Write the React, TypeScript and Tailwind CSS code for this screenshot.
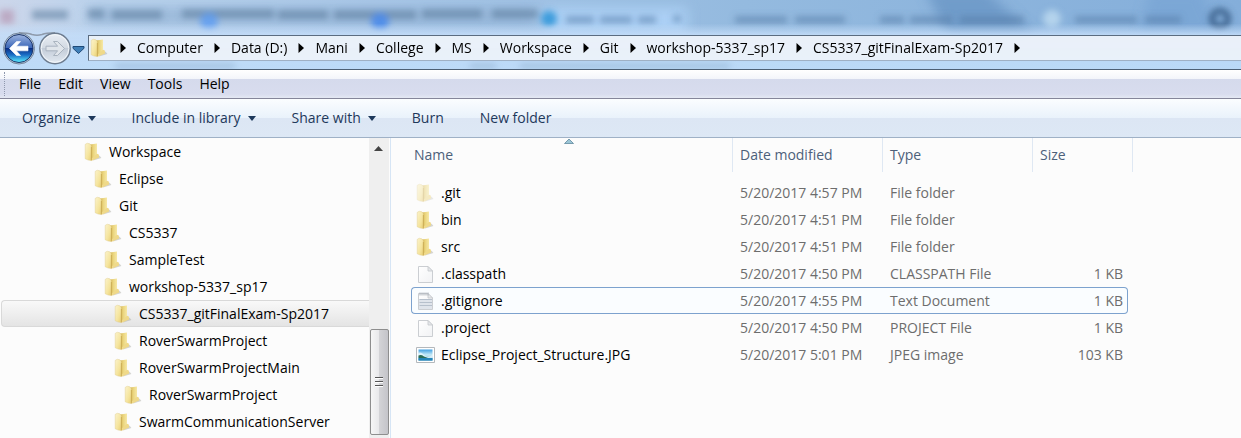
import { Fragment } from 'react';

const crumbs = ['Computer', 'Data (D:)', 'Mani', 'College', 'MS', 'Workspace', 'Git', 'workshop-5337_sp17', 'CS5337_gitFinalExam-Sp2017'];

const menus = ['File', 'Edit', 'View', 'Tools', 'Help'];

const commands = [
  { label: 'Organize', menu: true },
  { label: 'Include in library', menu: true },
  { label: 'Share with', menu: true },
  { label: 'Burn', menu: false },
  { label: 'New folder', menu: false },
];

const tree = [
  { name: 'Workspace', indent: 'pl-[81px]', selected: false },
  { name: 'Eclipse', indent: 'pl-[91px]', selected: false },
  { name: 'Git', indent: 'pl-[91px]', selected: false },
  { name: 'CS5337', indent: 'pl-[101px]', selected: false },
  { name: 'SampleTest', indent: 'pl-[101px]', selected: false },
  { name: 'workshop-5337_sp17', indent: 'pl-[101px]', selected: false },
  { name: 'CS5337_gitFinalExam-Sp2017', indent: 'pl-[111px]', selected: true },
  { name: 'RoverSwarmProject', indent: 'pl-[111px]', selected: false },
  { name: 'RoverSwarmProjectMain', indent: 'pl-[111px]', selected: false },
  { name: 'RoverSwarmProject', indent: 'pl-[121px]', selected: false },
  { name: 'SwarmCommunicationServer', indent: 'pl-[111px]', selected: false },
];

type Kind = 'hidden' | 'folder' | 'file' | 'text' | 'image';

const files: { name: string; kind: Kind; date: string; type: string; size: string; focused?: boolean }[] = [
  { name: '.git', kind: 'hidden', date: '5/20/2017 4:57 PM', type: 'File folder', size: '' },
  { name: 'bin', kind: 'folder', date: '5/20/2017 4:51 PM', type: 'File folder', size: '' },
  { name: 'src', kind: 'folder', date: '5/20/2017 4:51 PM', type: 'File folder', size: '' },
  { name: '.classpath', kind: 'file', date: '5/20/2017 4:50 PM', type: 'CLASSPATH File', size: '1 KB' },
  { name: '.gitignore', kind: 'text', date: '5/20/2017 4:55 PM', type: 'Text Document', size: '1 KB', focused: true },
  { name: '.project', kind: 'file', date: '5/20/2017 4:50 PM', type: 'PROJECT File', size: '1 KB' },
  { name: 'Eclipse_Project_Structure.JPG', kind: 'image', date: '5/20/2017 5:01 PM', type: 'JPEG image', size: '103 KB' },
];

function Gradients() {
  return (
    <svg className="absolute size-0" aria-hidden="true">
      <defs>
        <linearGradient id="folderFront" x1="0" y1="0" x2="1" y2="1">
          <stop offset="0" stopColor="#fbf3cc" />
          <stop offset="0.6" stopColor="#f5e49c" />
          <stop offset="1" stopColor="#e8cd72" />
        </linearGradient>
        <linearGradient id="folderBack" x1="0" y1="0" x2="1" y2="0">
          <stop offset="0" stopColor="#cfae4c" />
          <stop offset="0.45" stopColor="#ead47c" />
          <stop offset="1" stopColor="#f6e8a6" />
        </linearGradient>
        <linearGradient id="page" x1="0" y1="0" x2="1" y2="1">
          <stop offset="0" stopColor="#ffffff" />
          <stop offset="1" stopColor="#f1f2f4" />
        </linearGradient>
        <linearGradient id="photo" x1="0" y1="0" x2="0" y2="1">
          <stop offset="0" stopColor="#3f9ee0" />
          <stop offset="0.5" stopColor="#c9ecf8" />
          <stop offset="1" stopColor="#2c88b8" />
        </linearGradient>
        <linearGradient id="backButton" x1="0" y1="0" x2="0" y2="1">
          <stop offset="0" stopColor="#9db4e0" />
          <stop offset="0.48" stopColor="#3a66b8" />
          <stop offset="0.5" stopColor="#0b2f86" />
          <stop offset="0.72" stopColor="#1a6cc4" />
          <stop offset="1" stopColor="#5ff0ff" />
        </linearGradient>
        <linearGradient id="forwardButton" x1="0" y1="0" x2="0" y2="1">
          <stop offset="0" stopColor="#e9eef5" />
          <stop offset="0.48" stopColor="#d3dae3" />
          <stop offset="0.5" stopColor="#c3ccd8" />
          <stop offset="1" stopColor="#e3eaf2" />
        </linearGradient>
      </defs>
    </svg>
  );
}

function FolderIcon({ faded = false }: { faded?: boolean }) {
  return (
    <svg viewBox="0 0 20 20" className={faded ? 'size-5 shrink-0 opacity-50' : 'size-5 shrink-0'} aria-hidden="true">
      <path d="M10 18.6 18.4 16 16.6 13.8 12 14z" fill="#a3a39c" opacity="0.45" />
      <path d="M7 2.4 14 1.4V14.6L7 17.6z" fill="url(#folderBack)" />
      <path d="M14 11.8Q16 12 16 13.6V15.6L9.4 18.4 7 18z" fill="#efd98a" />
      <path d="M2.2 2.4Q4 .4 6.8 1.8Q8.4 2.8 8.4 5V18.6Q5 18.4 2.2 16.8z" fill="url(#folderFront)" stroke="#dcc787" strokeWidth="0.4" />
      <path d="M8.4 5V18.4" stroke="#c4a248" strokeWidth="0.7" />
    </svg>
  );
}

function PageIcon({ lined = false }: { lined?: boolean }) {
  return (
    <svg viewBox="0 0 20 20" className="size-5 shrink-0" aria-hidden="true">
      <path d="M3.5 2.5H13L17.5 7V18.5H3.5z" fill="url(#page)" stroke="#cbced2" strokeWidth="1" />
      <path d="M13 2.5V7H17.5z" fill="#e6e8eb" stroke="#c4c8cc" strokeWidth="0.8" />
      {lined && (
        <>
          <path d="M4 8h13v10H4z" fill="#dfe4eb" />
          <path d="M4.5 8.5h12.5M4.5 11.5h12.5M4.5 14.5h12.5" stroke="#b6c0cc" strokeWidth="1" />
          <path d="M5 1.5v3M7 1.5v3M9 1.5v3M11 1.5v3M13 1.5v3" stroke="#a8afb7" strokeWidth="1" />
        </>
      )}
    </svg>
  );
}

function ImageIcon() {
  return (
    <svg viewBox="0 0 20 20" className="size-5 shrink-0" aria-hidden="true">
      <path d="M1.5 2.5h18v15h-18z" fill="#fff" stroke="#b4b8bc" />
      <path d="M3.5 4.5h14v11h-14z" fill="url(#photo)" />
      <path d="M3.5 8Q6 6.5 9 10T17.5 10V13H3.5z" fill="#eefaff" opacity="0.7" />
      <path d="M3.5 10.5Q6 9.2 9 11.4L13 13H3.5z" fill="#2c6d56" />
      <path d="M3.5 13h14v2.5h-14z" fill="#2585b8" />
    </svg>
  );
}

function FileIcon({ kind }: { kind: Kind }) {
  if (kind === 'image') return <ImageIcon />;
  if (kind === 'file' || kind === 'text') return <PageIcon lined={kind === 'text'} />;
  return <FolderIcon faded={kind === 'hidden'} />;
}

/* Aero glass: what lies behind the window frame shows through as soft shapes. */
function Glass() {
  return (
    <svg className="absolute inset-0 size-full" viewBox="0 0 1241 70" preserveAspectRatio="none" aria-hidden="true">
      <defs>
        <filter id="soft" filterUnits="userSpaceOnUse" x="0" y="-20" width="1241" height="110">
          <feGaussianBlur stdDeviation="3" />
        </filter>
        <filter id="softer" filterUnits="userSpaceOnUse" x="-20" y="-30" width="1281" height="130">
          <feGaussianBlur stdDeviation="6" />
        </filter>
        <linearGradient id="sky" x1="0" y1="0" x2="1" y2="0">
          <stop offset="0" stopColor="#ccd6ea" />
          <stop offset="0.08" stopColor="#bad2ec" />
          <stop offset="0.3" stopColor="#a8c6e7" />
          <stop offset="0.6" stopColor="#94badf" />
          <stop offset="1" stopColor="#84aeda" />
        </linearGradient>
        <linearGradient id="lower" x1="0" y1="0" x2="0" y2="1">
          <stop offset="0.34" stopColor="#c3dcf8" stopOpacity="0" />
          <stop offset="0.5" stopColor="#c3dcf8" stopOpacity="0.85" />
          <stop offset="1" stopColor="#bddbf8" stopOpacity="0.95" />
        </linearGradient>
      </defs>
      <path d="M0 0h1241v70H0z" fill="url(#sky)" />
      <g filter="url(#softer)">
        <path d="M925 -10h60l55 50h-90z" fill="#6592c2" opacity="0.7" />
        <path d="M1150 -10h50l20 46h-80z" fill="#74a2d2" opacity="0.6" />
        <path d="M545 8h142v26H545z" fill="#acd0f5" />
        <path d="M88 8h445v16H88z" fill="#8fafd2" opacity="0.7" />
      </g>
      <g filter="url(#soft)">
        <path d="M0 10h14v14H0z" fill="#bcaac4" />
        <path d="M32 15h36M88 14h16M112 15h50M182 14h92M278 15h50M334 15h82M422 14h60M492 14h46" stroke="#5e7f9f" strokeWidth="9" opacity="0.6" />
        <path d="M566 20h28M600 20h32M638 20h18M673 19h8M735 20h52M795 20h50M880 20h24M910 20h42M960 20h64M1075 20h62M1145 20h36" stroke="#547ba5" strokeWidth="7" opacity="0.55" />
        <circle cx="549" cy="19" r="8" fill="#3c9cdc" />
        <circle cx="209" cy="22" r="9" fill="#5d9cf2" opacity="0.8" />
        <circle cx="380" cy="22" r="9" fill="#4b8bea" opacity="0.9" />
        <circle cx="1052" cy="19" r="9" fill="#b4d3ec" />
        <circle cx="1220" cy="19" r="8" fill="none" stroke="#3d648e" strokeWidth="6" />
      </g>
      <path d="M0 0h1241v70H0z" fill="url(#lower)" />
      <path d="M115 67h120M470 67h26M520 67h210" stroke="#88a6c6" strokeWidth="4" opacity="0.6" filter="url(#soft)" />
    </svg>
  );
}

function Caret() {
  return (
    <svg viewBox="0 0 8 5" className="h-[5px] w-2" aria-hidden="true">
      <path d="M0 0h8L4 5z" fill="#1e395b" />
    </svg>
  );
}

function Chevron() {
  return (
    <svg viewBox="0 0 6 10" className="mx-[11px] h-[10px] w-[6px] shrink-0" aria-hidden="true">
      <path d="M.5 0 6 5 .5 10z" fill="#000" />
    </svg>
  );
}

function AddressBar() {
  return (
    <header className="relative h-[70px] overflow-hidden border-b border-[#4d6075]">
      <Glass />
      <div className="relative flex pt-8">
        <div className="relative flex h-8 w-[88px] shrink-0 items-center">
          <svg viewBox="0 0 88 34" className="absolute inset-x-0 top-0 h-[34px] w-[88px]" aria-hidden="true">
            <path d="M19 .8Q28 .8 32 2.6Q37 4 42 2.6Q46 .8 55 .8" fill="none" stroke="#8e9aab" strokeWidth="1.6" />
            <circle cx="19" cy="16.5" r="15.5" fill="#b9c9dc" stroke="#76879c" />
            <circle cx="19" cy="16.5" r="14" fill="url(#backButton)" stroke="#1b3569" />
            <path d="M9.5 16.5 16.5 9.5H20.5L16.4 14.2H28V18.8H16.4L20.5 23.5H16.5z" fill="#fff" stroke="#fff" strokeWidth="0.6" />
            <circle cx="55" cy="16.5" r="15.2" fill="url(#forwardButton)" stroke="#6d7c8f" strokeWidth="1.4" />
            <circle cx="55" cy="16.5" r="13.8" fill="none" stroke="#f2f6fa" />
            <path d="M64.5 16.5 57.5 9.5H53.5L57.6 14.2H46V18.8H57.6L53.5 23.5H57.5z" fill="#e0e5eb" stroke="#a9b3bf" strokeWidth="1" />
            <path d="M73 14.5h11v1.8L78.5 21.5 73 16.3z" fill="#3f7fb8" stroke="#1f4a78" strokeWidth="1" />
          </svg>
          <button type="button" aria-label="Back" className="relative ml-1 size-8 rounded-full" />
          <button type="button" aria-label="Forward" className="relative ml-1 size-8 rounded-full" />
          <button type="button" aria-label="Recent pages" className="relative size-4" />
        </div>
        <nav aria-label="Address" className="mt-[3px] flex h-[26px] flex-1 items-center border border-r-0 border-[#5b6c80] border-b-[#9fb0c4] bg-[#eef3fa]/90 text-black">
          <FolderIcon />
          {crumbs.map((crumb) => (
            <Fragment key={crumb}>
              <Chevron />
              <a href="#" className="whitespace-nowrap">{crumb}</a>
            </Fragment>
          ))}
          <Chevron />
        </nav>
      </div>
    </header>
  );
}

function MenuBar() {
  return (
    <nav aria-label="Menu" className="flex h-[29px] items-center border-b border-[#85869a] bg-[linear-gradient(#ffffff,#f3f5fa_9px,#d5daec_9px,#d8dcee_24px,#e4e8f3_28px)]">
      <span className="ml-1 h-6 border-l border-dotted border-[#8f98ad]" />
      <div className="flex gap-[17px] pl-[14px]">
        {menus.map((menu) => (
          <button key={menu} type="button" className="text-black">{menu}</button>
        ))}
      </div>
    </nav>
  );
}

function CommandBar() {
  return (
    <div role="toolbar" aria-label="Commands" className="flex h-[39px] items-center gap-9 border-b border-[#9fb1c6] bg-[linear-gradient(#fbfdff,#e9f2fb_19px,#dce6f4_19px,#dde8f5)] pl-[22px] text-[#1e395b]">
      {commands.map((command) => (
        <button key={command.label} type="button" className="flex items-center gap-[7px]">
          {command.label}
          {command.menu && <Caret />}
        </button>
      ))}
    </div>
  );
}

function FolderTree() {
  return (
    <aside className="flex w-[391px] shrink-0 border-r border-[#d6e5f5]">
      <ul className="min-w-0 flex-1 pl-px">
        {tree.map((node, index) => (
          <li key={index}>
            <button
              type="button"
              className={`flex h-[27px] w-full items-center gap-[6px] whitespace-nowrap rounded-l-sm border border-r-0 text-black ${node.indent} ${node.selected ? 'border-[#d9d9d9] bg-linear-to-b from-[#f9f9f9] to-[#e4e4e4]' : 'border-transparent'}`}
            >
              <FolderIcon />
              {node.name}
            </button>
          </li>
        ))}
      </ul>
      <div className="mr-px flex w-5 shrink-0 flex-col items-center bg-[#efefef]">
        <svg viewBox="0 0 20 20" className="size-5" aria-hidden="true">
          <path d="M5 13 9.5 8 14 13z" fill="#444" />
        </svg>
        <div className="mt-[171px] flex h-[106px] w-[19px] flex-col items-center justify-center gap-[2px] rounded-xs border border-[#8e8e8e] bg-[linear-gradient(90deg,#f6f6f6,#e9e9eb_45%,#d3d3d6_50%,#c4c4c9)]">
          <span className="h-[2px] w-2 border-b border-white bg-[#555]" />
          <span className="h-[2px] w-2 border-b border-white bg-[#555]" />
          <span className="h-[2px] w-2 border-b border-white bg-[#555]" />
        </div>
      </div>
    </aside>
  );
}

function FileList() {
  const heading = 'h-[34px] border-r border-[#dfe8f3] p-0 pl-[7px] text-left font-normal';
  return (
    <main className="relative min-w-0 flex-1 pl-5">
      <svg viewBox="0 0 10 6" className="absolute left-[173px] top-0 h-[6px] w-[10px]" aria-hidden="true">
        <path d="M.5 5.5 5 1 9.5 5.5z" fill="#9cc6d6" stroke="#3c6b86" strokeWidth="0.6" />
      </svg>
      <table className="w-[722px] table-fixed border-separate border-spacing-0 whitespace-nowrap">
        <colgroup>
          <col className="w-[322px]" />
          <col className="w-[150px]" />
          <col className="w-[150px]" />
          <col className="w-[95px]" />
          <col className="w-[5px]" />
        </colgroup>
        <thead>
          <tr className="text-[#4c607a]">
            <th className="border-r border-[#dfe8f3] p-0 pl-[3px] text-left font-normal">Name</th>
            <th className={heading}>Date modified</th>
            <th className={heading}>Type</th>
            <th className={heading} colSpan={2}>Size</th>
          </tr>
        </thead>
        <tbody className="text-[#6d6d6d] before:block before:h-[7px]">
          {files.map((file) => {
            const edge = file.focused ? 'border-y border-[#7da2ce] bg-[#fafdff]' : 'border-y border-transparent';
            return (
              <tr key={file.name}>
                <td className={`h-[27px] border-l p-0 ${edge} ${file.focused ? 'rounded-l-sm' : ''}`}>
                  <span className="flex items-center gap-[6px] pl-[3px] text-black">
                    <FileIcon kind={file.kind} />
                    {file.name}
                  </span>
                </td>
                <td className={`p-0 pl-[7px] ${edge}`}>{file.date}</td>
                <td className={`p-0 pl-[7px] ${edge}`}>{file.type}</td>
                <td className={`border-r p-0 pr-1 text-right ${edge} ${file.focused ? 'rounded-r-sm' : ''}`}>{file.size}</td>
              </tr>
            );
          })}
        </tbody>
      </table>
    </main>
  );
}

export default function App() {
  return (
    <div className="flex min-h-screen flex-col overflow-hidden bg-[#fcfcfc] font-['Open_Sans','Noto_Sans',sans-serif] text-[14px] leading-5">
      <Gradients />
      <AddressBar />
      <MenuBar />
      <CommandBar />
      <div className="flex flex-1">
        <FolderTree />
        <FileList />
      </div>
    </div>
  );
}
